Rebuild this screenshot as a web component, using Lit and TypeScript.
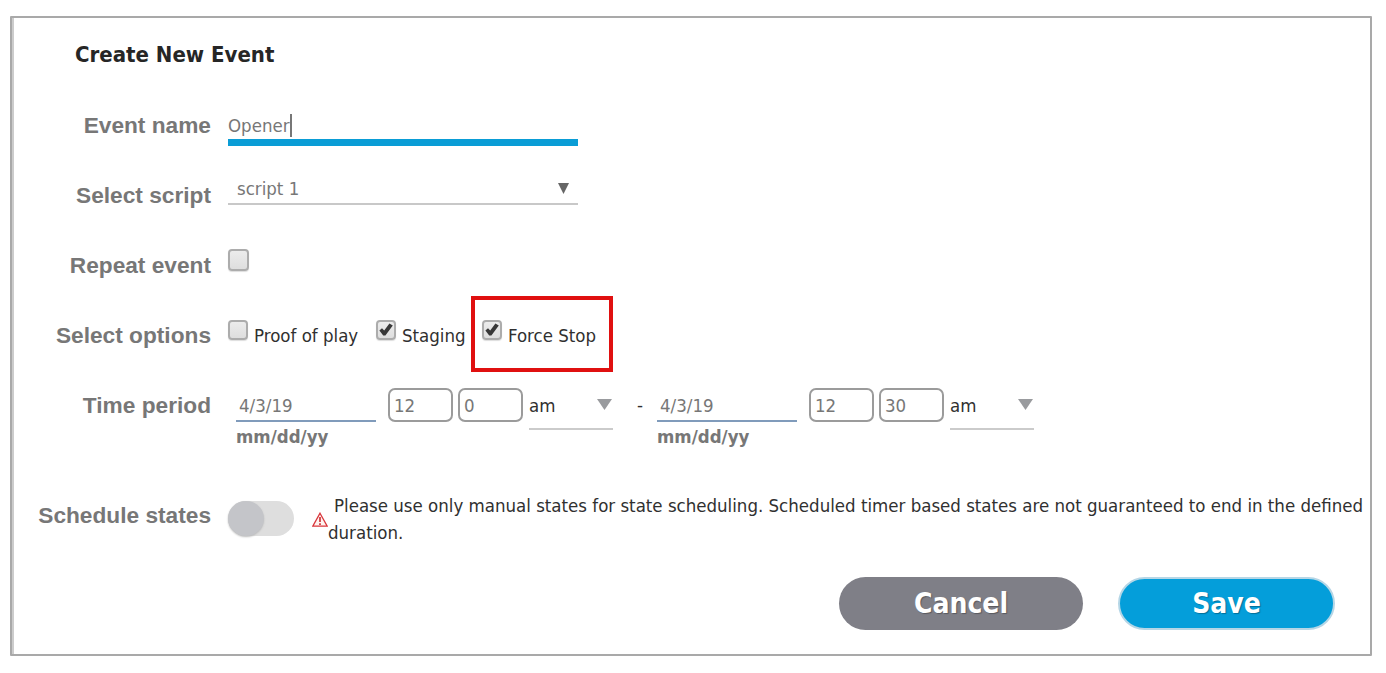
import { LitElement, html, css } from 'lit';
import { customElement, property } from 'lit/decorators.js';

@customElement('check-box')
export class CheckBox extends LitElement {
    static styles = css`
     :host {
        display: block;
        flex: none;
        width: 20px;
        height: 20px;
     }

     .box {
        box-sizing: border-box;
        width: 100%;
        height: 100%;
        border: 2px solid #acacac;
        border-radius: 4px;
        background: linear-gradient(#ececec, #dedede);
        box-shadow: 0 1px 1px #ddd;
     }

     svg {
        display: block;
        width: 100%;
        height: 100%;
     }
   `;

    @property({ type: Boolean })
    checked = false;

    render() {
        return html`
        <div class="box">
            ${ this.checked ? html`
            <svg viewBox="0 0 16 16">
                <path d="M1.4 8.4 L4 6.2 L6.2 8.6 L11.4 1.6 L14.8 3.4 L7.4 13.4 L5.2 13.4 Z" fill="#383838"></path>
            </svg>` : '' }
        </div>
     `;
    }
}

@customElement('date-time')
export class DateTime extends LitElement {
    static styles = css`
     :host {
        display: flex;
        align-items: flex-start;
        font-family: "DejaVu Sans Condensed", "DejaVu Sans", sans-serif;
        font-stretch: condensed;
        font-size: 18.5px;
        color: #777;
     }

     .date {
        width: 140px;
        margin-right: 12px;
     }

     .value {
        box-sizing: border-box;
        height: 34px;
        padding-left: 3px;
        line-height: 36px;
        border-bottom: 2px solid #809bbb;
     }

     .hint {
        font-weight: bold;
        line-height: 30px;
     }

     .number {
        box-sizing: border-box;
        width: 65px;
        height: 34px;
        margin-right: 5px;
        padding-left: 4px;
        line-height: 32px;
        border: 2px solid #9b9b9b;
        border-radius: 7px;
     }

     .half {
        box-sizing: border-box;
        display: flex;
        justify-content: space-between;
        width: 84px;
        height: 42px;
        margin-left: 1px;
        line-height: 36px;
        color: #303030;
        border-bottom: 2px solid #cbcbcb;
     }

     .arrow {
        width: 15px;
        height: 11px;
        margin: 11px 1px 0 0;
        fill: #999b9e;
     }
   `;

    @property()
    date = '';

    @property()
    hour = '';

    @property()
    minute = '';

    render() {
        return html`
        <div class="date">
            <div class="value">${ this.date }</div>
            <div class="hint">mm/dd/yy</div>
        </div>
        <div class="number">${ this.hour }</div>
        <div class="number">${ this.minute }</div>
        <div class="half">
            <span>am</span>
            <svg class="arrow" viewBox="0 0 15 11"><path d="M0 0H15L7.5 11Z"></path></svg>
        </div>
     `;
    }
}

@customElement('app-root')
export class AppRoot extends LitElement {
    static styles = css`
     :host {
        display: block;
        box-sizing: border-box;
        height: 673px;
        padding: 16px 14px 17px 10px;
        background: #fff;
        font-family: "DejaVu Sans Condensed", "DejaVu Sans", sans-serif;
        font-stretch: condensed;
        font-size: 18.5px;
        color: #303030;
     }

     .panel {
        box-sizing: border-box;
        height: 640px;
        border: 2px solid #a9a9a9;
        box-shadow: inset 2px 0 #ccc;
        border-radius: 1px;
     }

     h1 {
        margin: 0;
        height: 72px;
        padding-left: 63px;
        font-size: 22px;
        line-height: 74px;
        color: #262626;
     }

     .row {
        display: flex;
        height: 70px;
     }

     .row.time {
        height: 110px;
     }

     .label {
        flex: none;
        width: 199px;
        margin-right: 17px;
        text-align: right;
        font: bold 22.7px/70px "Liberation Sans", sans-serif;
        color: #777;
        white-space: nowrap;
     }

     .name {
        box-sizing: border-box;
        display: flex;
        width: 350px;
        height: 56px;
        padding-top: 24px;
        line-height: 24px;
        color: #777;
        border-bottom: 7px solid #0a9dd6;
     }

     .caret {
        width: 2px;
        height: 23px;
        background: #777;
     }

     .script {
        box-sizing: border-box;
        display: flex;
        justify-content: space-between;
        width: 350px;
        height: 45px;
        padding: 16px 9px 0 9px;
        line-height: 26px;
        color: #777;
        border-bottom: 2px solid #c8c8c8;
     }

     .script svg {
        width: 11px;
        height: 11px;
        margin-top: 7px;
        fill: #666;
     }

     .repeat {
        width: 21px;
        height: 22px;
        margin-top: 19px;
     }

     .option {
        display: flex;
        gap: 6px;
        height: 30px;
        margin-top: 20px;
        line-height: 31px;
        white-space: nowrap;
     }

     .proof {
        width: 148px;
     }

     .staging {
        width: 95px;
     }

     .marked {
        box-sizing: border-box;
        width: 142px;
        height: 76px;
        margin-top: -4px;
        padding: 20px 0 0 7px;
        border: 4px solid #e01010;
     }

     .period {
        margin: 18px 0 0 8px;
     }

     .dash {
        width: 44px;
        margin-top: 18px;
        padding-left: 10px;
        box-sizing: border-box;
        line-height: 34px;
        text-align: center;
     }

     .dash + .period {
        margin-left: 0;
     }

     .toggle {
        flex: none;
        width: 66px;
        height: 35px;
        margin: 21px 18px 0 0;
        border-radius: 18px;
        background: #dedede;
     }

     .knob {
        width: 36px;
        height: 35px;
        border-radius: 50%;
        background: #c4c5c9;
        box-shadow: 0 1px 2px #bbb;
     }

     .warning {
        flex: none;
        width: 16px;
        height: 15px;
        margin-top: 32px;
     }

     .note {
        margin: 12px 0 0;
        line-height: 27px;
        text-indent: 6px;
        white-space: nowrap;
     }

     .second {
        display: block;
        text-indent: 0;
     }

     .actions {
        display: flex;
        justify-content: flex-end;
        gap: 35px;
        padding: 27px 35px 0 0;
     }

     button {
        box-sizing: border-box;
        height: 53px;
        padding: 0;
        border: 0;
        border-radius: 27px;
        font-family: inherit;
        font-stretch: condensed;
        font-weight: bold;
        font-size: 28px;
        line-height: 53px;
        color: #fff;
        text-shadow: 1px 1px 1px rgba(0, 0, 0, 0.3);
     }

     .cancel {
        width: 244px;
        background: #7f7f87;
     }

     .save {
        width: 217px;
        border: 2px solid #b5d6e6;
        background: #049eda;
        line-height: 49px;
     }
   `;

    render() {
        return html`
        <div class="panel">
            <h1><span class="title">Create New Event</span></h1>
            <div class="row">
                <div class="label">Event name</div>
                <div class="name"><span>Opener</span><span class="caret"></span></div>
            </div>
            <div class="row">
                <div class="label">Select script</div>
                <div class="script">
                    <span>script 1</span>
                    <svg viewBox="0 0 11 11"><path d="M0 0H11L5.5 11Z"></path></svg>
                </div>
            </div>
            <div class="row">
                <div class="label">Repeat event</div>
                <check-box class="repeat"></check-box>
            </div>
            <div class="row">
                <div class="label">Select options</div>
                <div class="option proof"><check-box></check-box><span>Proof of play</span></div>
                <div class="option staging"><check-box checked></check-box><span>Staging</span></div>
                <div class="option marked"><check-box checked></check-box><span>Force Stop</span></div>
            </div>
            <div class="row time">
                <div class="label">Time period</div>
                <date-time class="period" date="4/3/19" hour="12" minute="0"></date-time>
                <span class="dash">-</span>
                <date-time class="period" date="4/3/19" hour="12" minute="30"></date-time>
            </div>
            <div class="row">
                <div class="label">Schedule states</div>
                <div class="toggle"><div class="knob"></div></div>
                <svg class="warning" viewBox="0 0 16 15">
                    <path d="M8 1.2L15.2 14.2H0.8Z" fill="#fff3f0" stroke="#d9363c" stroke-width="1.3"></path>
                    <path d="M8 5V10M8 11.2V13" stroke="#c8282e" stroke-width="1.6"></path>
                </svg>
                <p class="note">
                    <span class="first">Please use only manual states for state scheduling. Scheduled timer based states are not guaranteed to end in the defined</span>
                    <span class="second">duration.</span>
                </p>
            </div>
            <div class="actions">
                <button class="cancel">Cancel</button>
                <button class="save">Save</button>
            </div>
        </div>
     `;
    }
}

declare global {
    interface HTMLElementTagNameMap {
        'check-box': CheckBox;
        'date-time': DateTime;
        'app-root': AppRoot;
    }
}
